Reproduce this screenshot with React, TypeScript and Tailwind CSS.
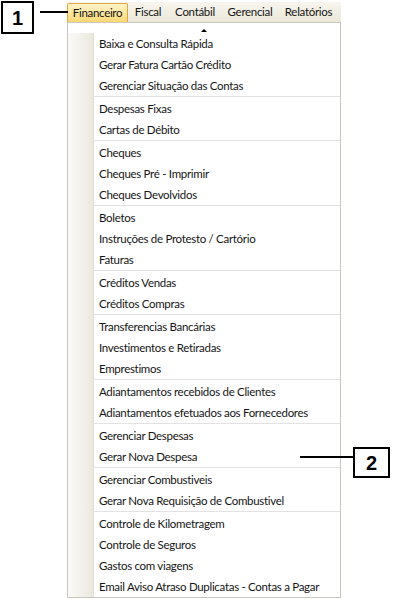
import React from "react";

const font = { fontFamily: 'Lato, "Open Sans", sans-serif' };

const topMenus = [
  { label: "Financeiro", width: "w-[61px]", active: true },
  { label: "Fiscal", width: "w-[40px]" },
  { label: "Contábil", width: "w-[54px]" },
  { label: "Gerencial", width: "w-[56px]" },
  { label: "Relatórios", width: "w-[61px]" },
];

// grupos do menu Financeiro, separados por linhas
const groups: string[][] = [
  ["Baixa e Consulta Rápida", "Gerar Fatura Cartão Crédito", "Gerenciar Situação das Contas"],
  ["Despesas Fixas", "Cartas de Débito"],
  ["Cheques", "Cheques Pré - Imprimir", "Cheques Devolvidos"],
  ["Boletos", "Instruções de Protesto / Cartório", "Faturas"],
  ["Créditos Vendas", "Créditos Compras"],
  ["Transferencias Bancárias", "Investimentos e Retiradas", "Emprestimos"],
  ["Adiantamentos recebidos de Clientes", "Adiantamentos efetuados aos Fornecedores"],
  ["Gerenciar Despesas", "Gerar Nova Despesa"],
  ["Gerenciar Combustiveis", "Gerar Nova Requisição de Combustivel"],
  [
    "Controle de Kilometragem",
    "Controle de Seguros",
    "Gastos com viagens",
    "Email Aviso Atraso Duplicatas - Contas a Pagar",
  ],
];

function Callout({ n, className }: { n: string; className: string }) {
  return (
    <div
      className={`absolute flex items-center justify-center border-2 border-black bg-white font-bold text-black ${className}`}
      style={{ fontFamily: '"Liberation Sans", Arial, sans-serif' }}
    >
      {n}
    </div>
  );
}

export default function App() {
  return (
    <div className="relative w-[394px] h-[599px] bg-white overflow-hidden" style={font}>
      <div className="pl-[67px] pt-[2px] flex flex-col w-[341px]">
        {/* barra de menus */}
        <div className="h-[20px] w-[274px] flex items-stretch bg-linear-to-b from-[#f7f5ee] to-[#ebe7d9]">
          {topMenus.map((m) => (
            <div
              key={m.label}
              className={`${m.width} shrink-0 flex items-center justify-center text-[11.5px] tracking-[-0.3px] text-[#151515] ${
                m.active
                  ? "mt-[1px] rounded-t-[2px] border border-b-0 border-[#e3a640] bg-linear-to-b from-[#fff3c9] to-[#fcd873]"
                  : ""
              }`}
            >
              {m.label}
            </div>
          ))}
        </div>

        {/* menu suspenso */}
        <div className="w-[274px] border border-[#c9c6bd] bg-white flex flex-col">
          <div className="h-[10px] flex justify-center pt-[6px]">
            <div className="w-0 h-0 border-l-[3px] border-r-[3px] border-b-[3px] border-l-transparent border-r-transparent border-b-black" />
          </div>
          <div className="flex">
            <div className="w-[26px] shrink-0 bg-linear-to-r from-[#fafaf7] to-[#ebe8de] border-r border-[#e2dfd5]" />
            <div className="flex-1 min-w-0 flex flex-col">
              {groups.map((g, gi) => (
                <div key={gi} className="flex flex-col">
                  {gi > 0 && (
                    <div className="h-[2px] flex flex-col">
                      <div className="h-[1px] bg-[#e2e2e2]" />
                    </div>
                  )}
                  {g.map((item) => (
                    <div
                      key={item}
                      className="h-[21px] flex items-center pl-[5px] text-[11.5px] tracking-[-0.3px] text-[#151515] whitespace-nowrap"
                    >
                      {item}
                    </div>
                  ))}
                </div>
              ))}
            </div>
          </div>
        </div>
      </div>

      {/* anotações */}
      <Callout n="1" className="left-[1px] top-[1px] w-[33px] h-[33px] text-[20px]" />
      <div className="absolute left-[40px] top-[11px] w-[28px] h-[2px] bg-black" />
      <Callout n="2" className="left-[353px] top-[447px] w-[37px] h-[31px] text-[20px]" />
      <div className="absolute left-[300px] top-[456px] w-[53px] h-[2px] bg-black" />
    </div>
  );
}
